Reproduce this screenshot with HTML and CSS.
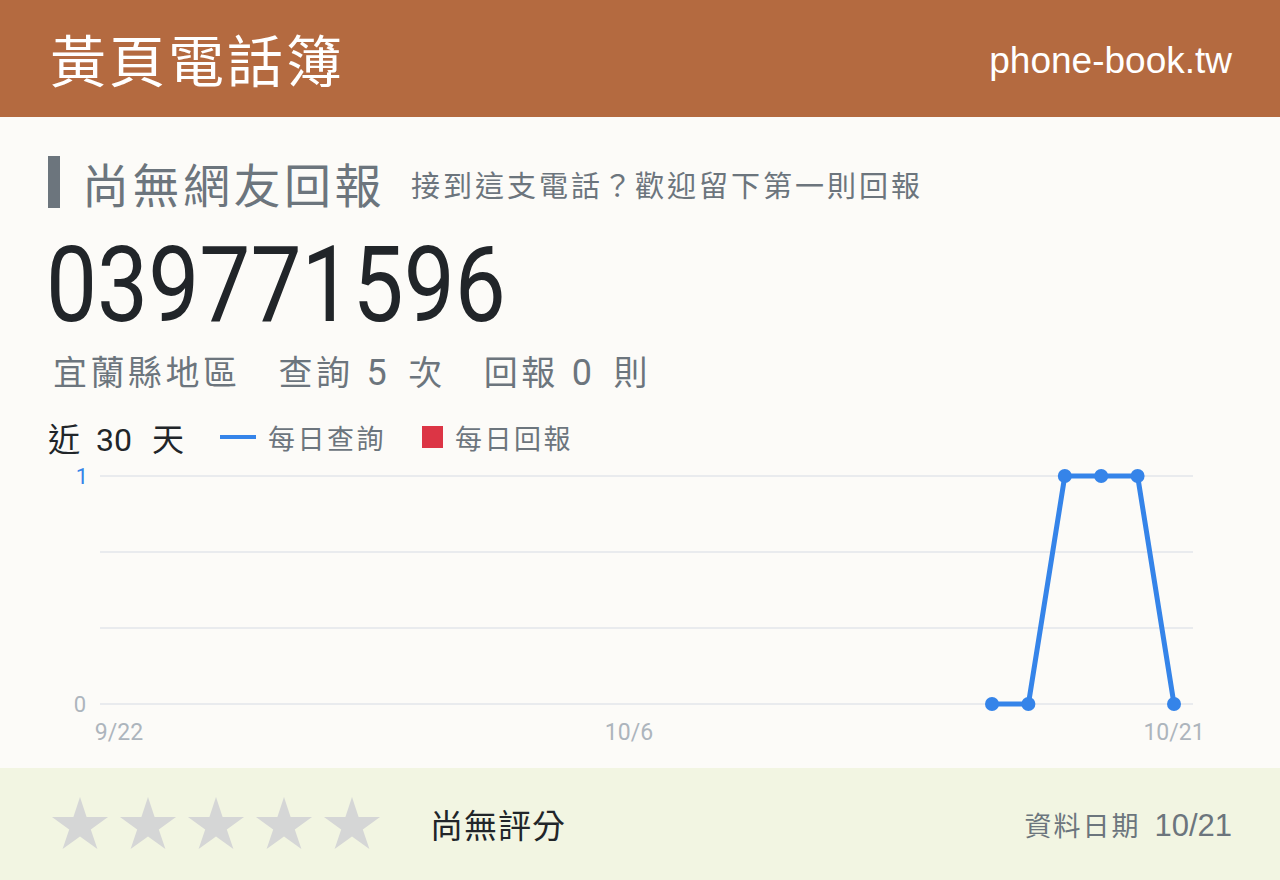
FILE: index.html
```html
<!DOCTYPE html>
<html lang="zh-Hant">
<head>
<meta charset="utf-8">
<title>039771596 - 黃頁電話簿</title>
<link rel="stylesheet" href="styles.css">
</head>
<body>
  <header class="site-header">
    <div class="brand">黃頁電話簿</div>
    <div class="domain">phone-book.tw</div>
  </header>

  <main class="main">
    <div class="title-row">
      <h1 class="title">尚無網友回報</h1>
      <span class="subtitle">接到這支電話？歡迎留下第一則回報</span>
    </div>

    <div class="number-wrap"><div class="number">039771596</div></div>

    <div class="stats">
      <span class="region">宜蘭縣地區</span>
      <span class="stat">查詢<span class="num">5</span>次</span>
      <span class="stat">回報<span class="num">0</span>則</span>
    </div>

    <div class="legend">
      <span class="period">近<span class="days">30</span>天</span>
      <span class="legend-item"><i class="swatch-line"></i>每日查詢</span>
      <span class="legend-item"><i class="swatch-box"></i>每日回報</span>
    </div>

    <svg class="chart" width="1184" height="306" viewBox="48 462 1184 306">
      <g class="grid">
        <line x1="100" y1="476" x2="1193" y2="476"/>
        <line x1="100" y1="552" x2="1193" y2="552"/>
        <line x1="100" y1="628" x2="1193" y2="628"/>
        <line x1="100" y1="704" x2="1193" y2="704"/>
      </g>
      <text class="y-label y-label-top" x="88" y="484">1</text>
      <text class="y-label" x="86" y="712">0</text>
      <text class="x-label" x="119" y="740">9/22</text>
      <text class="x-label" x="629" y="740">10/6</text>
      <text class="x-label" x="1174" y="740">10/21</text>
      <polyline class="series" points="992,704 1028.4,704 1064.8,476 1101.2,476 1137.6,476 1174,704"/>
      <g class="dots">
        <circle cx="992" cy="704" r="7"/>
        <circle cx="1028.4" cy="704" r="7"/>
        <circle cx="1064.8" cy="476" r="7"/>
        <circle cx="1101.2" cy="476" r="7"/>
        <circle cx="1137.6" cy="476" r="7"/>
        <circle cx="1174" cy="704" r="7"/>
      </g>
    </svg>
  </main>

  <footer class="footer">
    <div class="stars">
      <svg class="star" viewBox="0 0 56 52"><polygon points="28,0 34.6,20 56,20 38.8,32.6 45.4,52 28,39.6 10.6,52 17.2,32.6 0,20 21.4,20"/></svg>
      <svg class="star" viewBox="0 0 56 52"><polygon points="28,0 34.6,20 56,20 38.8,32.6 45.4,52 28,39.6 10.6,52 17.2,32.6 0,20 21.4,20"/></svg>
      <svg class="star" viewBox="0 0 56 52"><polygon points="28,0 34.6,20 56,20 38.8,32.6 45.4,52 28,39.6 10.6,52 17.2,32.6 0,20 21.4,20"/></svg>
      <svg class="star" viewBox="0 0 56 52"><polygon points="28,0 34.6,20 56,20 38.8,32.6 45.4,52 28,39.6 10.6,52 17.2,32.6 0,20 21.4,20"/></svg>
      <svg class="star" viewBox="0 0 56 52"><polygon points="28,0 34.6,20 56,20 38.8,32.6 45.4,52 28,39.6 10.6,52 17.2,32.6 0,20 21.4,20"/></svg>
    </div>
    <div class="rating-text">尚無評分</div>
    <div class="updated">資料日期<span class="updated-date">10/21</span></div>
  </footer>
</body>
</html>
```

FILE: styles.css
```css
html, body {
  margin: 0;
  padding: 0;
}

body {
  width: 1280px;
  height: 880px;
  overflow: hidden;
  background: #fcfbf8;
  font-family: "Liberation Sans", "Noto Sans CJK TC", sans-serif;
  color: #212529;
}

/* top bar */
.site-header {
  height: 117px;
  background: #b46a40;
  color: #ffffff;
  display: flex;
  align-items: center;
  justify-content: space-between;
  padding: 0 48px 0 50px;
  box-sizing: border-box;
}

.brand {
  font-family: "Noto Sans CJK TC", sans-serif;
  font-size: 56px;
  letter-spacing: 3px;
  line-height: 1;
  margin-top: -2px;
}

.domain {
  font-family: "Liberation Sans", sans-serif;
  font-size: 37px;
  line-height: 1;
  margin-top: 4px;
}

/* main content */
.main {
  padding: 39px 48px 0;
}

.title-row {
  display: flex;
  align-items: center;
  height: 52px;
  border-left: 12px solid #6c757d;
  padding-left: 22px;
  gap: 26px;
}

.title {
  margin: 0;
  font-family: "Noto Sans CJK TC", sans-serif;
  font-weight: 400;
  font-size: 47px;
  letter-spacing: 3.5px;
  line-height: 1;
  color: #6c757d;
}

.subtitle {
  font-family: "Noto Sans CJK TC", sans-serif;
  font-size: 29px;
  letter-spacing: 3px;
  line-height: 1;
  color: #6c757d;
  margin-top: 4px;
}

.number-wrap {
  margin-top: 25px;
  height: 103px;
}

.number {
  font-family: "Roboto", sans-serif;
  font-size: 105px;
  line-height: 105px;
  color: #212529;
  transform: scaleX(0.866);
  transform-origin: left center;
  margin-left: -2px;
  white-space: nowrap;
}

.stats {
  margin-top: 15px;
  height: 40px;
  line-height: 40px;
  font-family: "Noto Sans CJK TC", sans-serif;
  font-size: 34px;
  letter-spacing: 3.5px;
  color: #6c757d;
  padding-left: 5px;
  display: flex;
  gap: 38px;
}

.stats .num {
  font-family: "Roboto", sans-serif;
  font-size: 36px;
  margin: 0 18px 0 13px;
}

.legend {
  margin-top: 28px;
  height: 36px;
  display: flex;
  align-items: center;
  font-family: "Noto Sans CJK TC", sans-serif;
}

.period {
  font-size: 32px;
  color: #212529;
  margin-right: 36px;
}

.days {
  font-family: "Roboto", sans-serif;
  margin: 0 20px 0 16px;
}

.legend-item {
  display: flex;
  align-items: center;
  font-size: 27px;
  letter-spacing: 2.5px;
  color: #6c757d;
  margin-right: 36px;
}

.swatch-line {
  display: inline-block;
  width: 36px;
  height: 4px;
  background: #3584e9;
  margin-right: 12px;
}

.swatch-box {
  display: inline-block;
  width: 21px;
  height: 22px;
  background: #dc3545;
  margin-right: 12px;
}

/* chart */
.chart {
  display: block;
  margin-top: 7px;
}

.grid line {
  stroke: #e9ebee;
  stroke-width: 2;
}

.y-label {
  font-family: "Roboto", sans-serif;
  font-size: 22px;
  fill: #adb5bd;
  text-anchor: end;
}

.y-label-top {
  fill: #3584e9;
}

.x-label {
  font-family: "Roboto", sans-serif;
  font-size: 23px;
  fill: #adb5bd;
  text-anchor: middle;
}

.series {
  fill: none;
  stroke: #3584e9;
  stroke-width: 5;
  stroke-linejoin: round;
}

.dots circle {
  fill: #3584e9;
}

/* rating footer */
.footer {
  height: 112px;
  background: #f2f5e2;
  display: flex;
  align-items: center;
  padding: 0 48px 0 52px;
  box-sizing: border-box;
}

.stars {
  display: flex;
  gap: 12px;
  margin-top: -2px;
}

.star {
  width: 56px;
  height: 52px;
  fill: #d5d6d6;
}

.rating-text {
  margin-left: 50px;
  font-family: "Noto Sans CJK TC", sans-serif;
  font-size: 33px;
  letter-spacing: 1px;
  color: #212529;
  line-height: 1;
}

.updated {
  margin-left: auto;
  font-family: "Noto Sans CJK TC", sans-serif;
  font-size: 27px;
  letter-spacing: 2px;
  color: #6c757d;
  display: flex;
  align-items: baseline;
}

.updated-date {
  font-family: "Liberation Sans", sans-serif;
  font-size: 31px;
  letter-spacing: 0;
  margin-left: 14px;
}
```
